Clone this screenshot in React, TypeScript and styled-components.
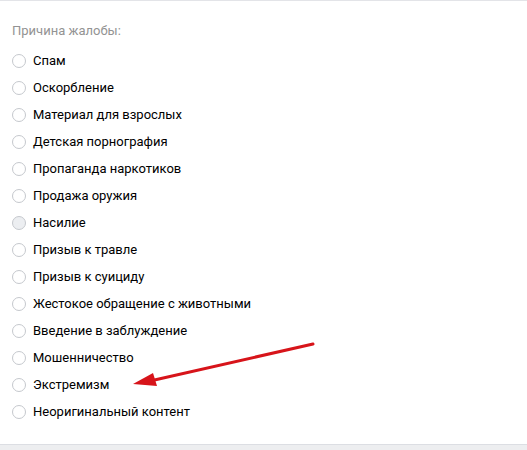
import React, { useState } from 'react';
import styled, { createGlobalStyle } from 'styled-components';

const GlobalStyle = createGlobalStyle`
  html, body {
    margin: 0;
    padding: 0;
    background: #edeef0;
  }
  body {
    font-family: Roboto, "Open Sans", Arial, sans-serif;
    -webkit-font-smoothing: antialiased;
  }
`;

const Panel = styled.div`
  position: relative;
  box-sizing: border-box;
  height: 445px;
  background: #fff;
  border-top: 1px solid #e3e4e8;
  border-bottom: 1px solid #dcdee3;
  padding: 21px 12px 0;
`;

const Heading = styled.div`
  font-size: 13px;
  line-height: 18px;
  color: #939393;
  margin-bottom: 7px;
`;

const List = styled.div`
  display: flex;
  flex-direction: column;
`;

const Row = styled.label`
  display: flex;
  align-items: center;
  height: 27px;
  gap: 7px;
  font-size: 13px;
  color: #000;
  cursor: pointer;
`;

const Radio = styled.span<{ $hover?: boolean }>`
  box-sizing: border-box;
  width: 14px;
  height: 14px;
  border-radius: 50%;
  border: 1px solid #c5c8cd;
  background: ${(p) => (p.$hover ? '#eceef1' : '#fff')};
  flex: none;
`;

const Arrow = styled.svg`
  position: absolute;
  left: 0;
  top: 0;
  pointer-events: none;
`;

const reasons = [
  'Спам',
  'Оскорбление',
  'Материал для взрослых',
  'Детская порнография',
  'Пропаганда наркотиков',
  'Продажа оружия',
  'Насилие',
  'Призыв к травле',
  'Призыв к суициду',
  'Жестокое обращение с животными',
  'Введение в заблуждение',
  'Мошенничество',
  'Экстремизм',
  'Неоригинальный контент',
];

export default function App() {
  const [hovered] = useState('Насилие');
  return (
    <>
      <GlobalStyle />
      <Panel>
        <Heading>Причина жалобы:</Heading>
        <List>
          {reasons.map((r) => (
            <Row key={r}>
              <Radio $hover={r === hovered} />
              {r}
            </Row>
          ))}
        </List>
        <Arrow width="527" height="445" viewBox="0 0 527 445">
          <line x1="313" y1="343" x2="150" y2="380" stroke="#d7141a" strokeWidth="3" strokeLinecap="round" />
          <polygon points="133,383 153,372 157,385" fill="#d7141a" />
        </Arrow>
      </Panel>
    </>
  );
}
